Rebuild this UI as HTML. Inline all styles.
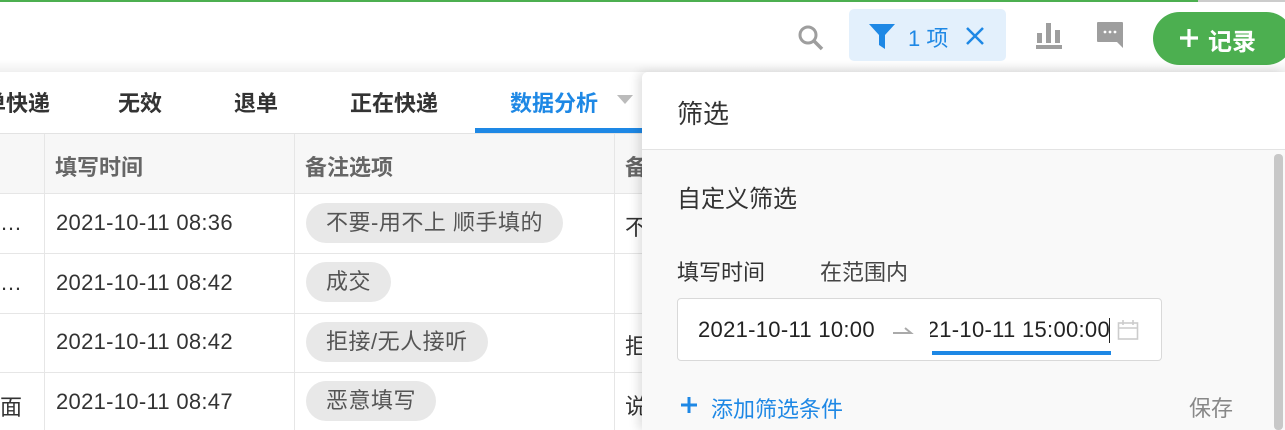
<!DOCTYPE html>
<html><head><meta charset="utf-8"><style>
*{margin:0;padding:0;box-sizing:border-box}
body{width:1285px;height:430px;overflow:hidden;background:#fff;font-family:"Liberation Sans","Noto Sans CJK SC",sans-serif;position:relative;color:#333}
.abs{position:absolute}
.topline{left:0;top:0;width:1198px;height:2px;background:#4caf50}
.topline2{left:1198px;top:0;width:87px;height:2px;background:#ccc}
.hdr{left:0;top:2px;width:1285px;height:70px;background:linear-gradient(#fff 0,#fff 58px,#f0f0f0 70px)}
.tab{top:86px;font-size:22px;font-weight:bold;color:#333;white-space:nowrap}
.cell{font-size:22px;color:#333;letter-spacing:.3px;white-space:nowrap}
.pill{background:#e8e8e8;border-radius:20px;height:40px;line-height:40px;padding:0 20px;font-size:22px;letter-spacing:.5px;color:#555;white-space:nowrap}
.th{top:150px;font-size:22px;font-weight:bold;color:#666}
</style></head><body>
<div class="abs topline"></div><div class="abs topline2"></div>
<div class="abs hdr"></div>
<svg class="abs" style="left:797px;top:24px" width="30" height="28" viewBox="0 0 30 28"><circle cx="11" cy="11" r="8" fill="none" stroke="#9e9e9e" stroke-width="3"/><line x1="17" y1="17" x2="25" y2="25" stroke="#9e9e9e" stroke-width="3.5"/></svg>
<div class="abs" style="left:849px;top:9px;width:157px;height:52px;background:#e3f0fc;border-radius:5px"></div>
<svg class="abs" style="left:868px;top:23px" width="28" height="27" viewBox="0 0 28 27"><path d="M1 1h26l-10 11v14l-6-4v-10z" fill="#1e88e5"/></svg>
<div class="abs" style="left:908px;top:21px;font-size:22px;color:#1e88e5">1 项</div>
<svg class="abs" style="left:965px;top:27px" width="20" height="18" viewBox="0 0 20 18"><path d="M2 1l16 16M18 1L2 17" stroke="#1e88e5" stroke-width="2.5"/></svg>
<svg class="abs" style="left:1035px;top:21px" width="28" height="29" viewBox="0 0 28 29"><rect x="1" y="24" width="26" height="4" fill="#9e9e9e"/><rect x="2" y="12" width="5" height="10" fill="#9e9e9e"/><rect x="11" y="2" width="5" height="20" fill="#9e9e9e"/><rect x="20" y="9" width="5" height="13" fill="#9e9e9e"/></svg>
<svg class="abs" style="left:1096px;top:21px" width="28" height="28" viewBox="0 0 28 28"><path d="M2 1h24a1 1 0 0 1 1 1v25l-6-6H2a1 1 0 0 1-1-1V2a1 1 0 0 1 1-1z" fill="#9e9e9e"/><circle cx="9" cy="11" r="1.4" fill="#fff"/><circle cx="14" cy="11" r="1.4" fill="#fff"/><circle cx="19" cy="11" r="1.4" fill="#fff"/></svg>
<div class="abs" style="left:1153px;top:12px;width:140px;height:53px;background:#4caf50;border-radius:27px"></div>
<svg class="abs" style="left:1179px;top:28px" width="20" height="20" viewBox="0 0 20 20"><path d="M10 1v18M1 10h18" stroke="#fff" stroke-width="3.2"/></svg>
<div class="abs" style="left:1208px;top:22px;font-size:24px;font-weight:bold;color:#fff">记录</div>

<div class="abs tab" style="left:-16px">单快递</div>
<div class="abs tab" style="left:118px">无效</div>
<div class="abs tab" style="left:234px">退单</div>
<div class="abs tab" style="left:350px">正在快递</div>
<div class="abs tab" style="left:510px;color:#1e88e5">数据分析</div>
<svg class="abs" style="left:617px;top:95px" width="16" height="10"><path d="M0 0h16l-8 9z" fill="#bbb"/></svg>
<div class="abs" style="left:475px;top:128px;width:170px;height:5px;background:#1e88e5"></div>
<div class="abs" style="left:0;top:133px;width:642px;height:1px;background:#e3e3e3"></div>

<div class="abs" style="left:0;top:134px;width:642px;height:59px;background:#f7f7f7"></div>
<div class="abs th" style="left:55px">填写时间</div>
<div class="abs th" style="left:305px">备注选项</div>
<div class="abs th" style="left:625px">备</div>
<div class="abs" style="left:0;top:193px;width:642px;height:1px;background:#e6e6e6"></div>
<div class="abs" style="left:0;top:253px;width:642px;height:1px;background:#e6e6e6"></div>
<div class="abs" style="left:0;top:313px;width:642px;height:1px;background:#e6e6e6"></div>
<div class="abs" style="left:0;top:372px;width:642px;height:1px;background:#e6e6e6"></div>
<div class="abs" style="left:44px;top:134px;width:1px;height:296px;background:#e6e6e6"></div>
<div class="abs" style="left:294px;top:134px;width:1px;height:296px;background:#e6e6e6"></div>
<div class="abs" style="left:614px;top:134px;width:1px;height:296px;background:#e6e6e6"></div>

<div class="abs cell" style="left:0;top:210px">…</div>
<div class="abs cell" style="left:0;top:270px">…</div>
<div class="abs cell" style="left:0;top:390px">面</div>
<div class="abs cell" style="left:56px;top:210px">2021-10-11 08:36</div>
<div class="abs cell" style="left:56px;top:270px">2021-10-11 08:42</div>
<div class="abs cell" style="left:56px;top:329px">2021-10-11 08:42</div>
<div class="abs cell" style="left:56px;top:389px">2021-10-11 08:47</div>
<div class="abs pill" style="left:306px;top:203px">不要-用不上 顺手填的</div>
<div class="abs pill" style="left:306px;top:262px">成交</div>
<div class="abs pill" style="left:306px;top:322px">拒接/无人接听</div>
<div class="abs pill" style="left:306px;top:381px">恶意填写</div>
<div class="abs cell" style="left:625px;top:210px">不</div>
<div class="abs cell" style="left:625px;top:329px">拒</div>
<div class="abs cell" style="left:625px;top:389px">说</div>

<div class="abs" style="left:642px;top:72px;width:643px;height:358px;background:#f9f9f9;box-shadow:-4px 0 10px rgba(0,0,0,.12);border-top-left-radius:6px;overflow:hidden">
 <div style="height:78px;background:#fff;border-bottom:1px solid #e3e3e3"></div>
</div>
<div class="abs" style="left:677px;top:94px;font-size:26px;color:#333">筛选</div>
<div class="abs" style="left:1274px;top:154px;width:9px;height:276px;background:#c8c8c8;border-radius:4px"></div>
<div class="abs" style="left:677px;top:179px;font-size:24px;color:#333">自定义筛选</div>
<div class="abs" style="left:677px;top:255px;font-size:22px;color:#333">填写时间</div>
<div class="abs" style="left:820px;top:255px;font-size:22px;color:#444">在范围内</div>
<div class="abs" style="left:677px;top:298px;width:485px;height:63px;background:#fff;border:1px solid #d9d9d9;border-radius:4px;overflow:hidden">
 <div class="abs cell" style="left:20px;top:18px;color:#222">2021-10-11 10:00</div>
 <svg class="abs" style="left:214px;top:24px" width="22" height="12"><path d="M1 10h18l-6-5" fill="none" stroke="#aaa" stroke-width="2"/></svg>
 <div class="abs cell" style="left:252px;top:18px;width:180px;overflow:hidden;direction:rtl;color:#222"><span style="direction:ltr;unicode-bidi:embed">2021-10-11 15:00:00</span></div>
 <div class="abs" style="left:431px;top:19px;width:1px;height:25px;background:#222"></div>
 <svg class="abs" style="left:439px;top:20px" width="22" height="22" viewBox="0 0 22 22"><rect x="1.5" y="4" width="19" height="16" fill="none" stroke="#ccc" stroke-width="1.6"/><line x1="1.5" y1="9" x2="20.5" y2="9" stroke="#ccc" stroke-width="1.6"/><line x1="6" y1="1" x2="6" y2="6" stroke="#ccc" stroke-width="1.6"/><line x1="16" y1="1" x2="16" y2="6" stroke="#ccc" stroke-width="1.6"/></svg>
 <div class="abs" style="left:254px;top:52px;width:179px;height:4px;background:#1e88e5"></div>
</div>
<svg class="abs" style="left:680px;top:396px" width="18" height="18" viewBox="0 0 18 18"><path d="M9 1v16M1 9h16" stroke="#1e88e5" stroke-width="3"/></svg>
<div class="abs" style="left:711px;top:392px;font-size:22px;color:#1e88e5">添加筛选条件</div>
<div class="abs" style="left:1189px;top:391px;font-size:22px;color:#888">保存</div>
</body></html>
